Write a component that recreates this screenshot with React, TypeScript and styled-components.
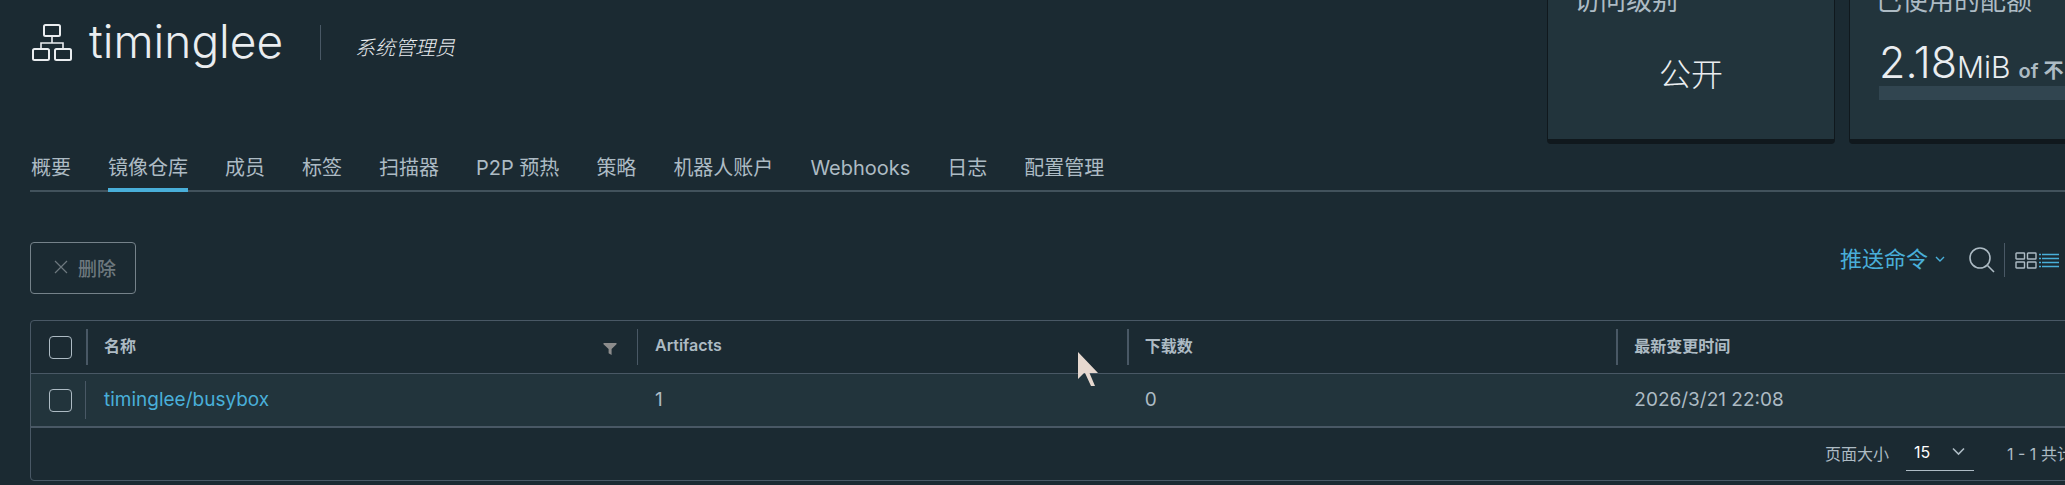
import React from "react";
import styled, { createGlobalStyle } from "styled-components";

const c = {
  bg: "#1b2a32",
  panel: "#22343c",
  line: "#495865",
  text: "#adbbc4",
  bright: "#eaedf0",
  link: "#49afd9",
  disabled: "#6d787e",
};

const GlobalStyle = createGlobalStyle`
  *, *::before, *::after { box-sizing: border-box; }
  html { background: ${c.bg}; }
  body {
    margin: 0;
    background: ${c.bg};
    color: ${c.text};
    font-family: Inter, "Noto Sans CJK SC", sans-serif;
    font-size: 19px;
    font-weight: 400;
    overflow: hidden;
  }
  button, select, input { font: inherit; margin: 0; }
  h1, h2, p { margin: 0; font-weight: 300; }
`;

const Page = styled.main`
  padding-left: 30px;
  margin-right: -42px;
`;

const Header = styled.header`
  display: flex;
  justify-content: space-between;
  height: 144px;
  overflow: hidden;
`;

const TitleRow = styled.div`
  display: flex;
  align-items: flex-start;
  padding-top: 24px;
`;

const ProjectIcon = styled.svg`
  width: 40px;
  height: 38px;
  margin-left: 2px;
`;

const Title = styled.h1`
  min-width: 196px;
  margin: -8px 35px 0 17px;
  color: ${c.bright};
  font-size: 46px;
  line-height: 50px;
`;

const Role = styled.em`
  margin-top: 1px;
  height: 35px;
  padding-left: 34px;
  border-left: 1px solid ${c.line};
  color: ${c.bright};
  font-size: 20px;
  font-weight: 300;
  line-height: 46px;
`;

const Cards = styled.div`
  display: flex;
  align-items: flex-end;
  gap: 14px;
  margin-right: -30px;
`;

const Card = styled.section`
  flex: none;
  width: 288px;
  height: 176px;
  padding: 12px 28px 0;
  border: 1px solid #10181d;
  border-bottom-width: 5px;
  border-radius: 4px;
  background: ${c.panel};
`;

const CardTitle = styled.h2`
  margin-left: -2px;
  font-size: 26px;
  font-weight: 400;
  line-height: 40px;
  white-space: nowrap;
`;

const Access = styled.p`
  margin-top: 34px;
  color: ${c.bright};
  font-size: 32px;
  line-height: 40px;
  text-align: center;
`;

const Quota = styled.p`
  display: flex;
  align-items: baseline;
  margin-top: 21px;
  padding-left: 1px;
  color: ${c.bright};
  font-size: 43px;
  line-height: 40px;
  white-space: nowrap;
`;

const Unit = styled.span`
  font-size: 30px;
`;

const Limit = styled.span`
  margin-left: 8px;
  color: ${c.text};
  font-size: 20px;
  font-weight: 600;
`;

const Meter = styled.div`
  height: 14px;
  margin: -5px 0 0 1px;
  background: #314550;
`;

const Tabs = styled.nav`
  display: flex;
  gap: 37px;
  height: 48px;
  padding-left: 1px;
  box-shadow: inset 0 -2px 0 #42525c;
`;

const Tab = styled.a<{ $active?: boolean }>`
  height: 48px;
  border-bottom: 4px solid ${(p) => (p.$active ? c.link : "transparent")};
  color: ${c.text};
  font-size: 20px;
  line-height: 48px;
  text-decoration: none;
  white-space: nowrap;
`;

const Toolbar = styled.div`
  display: flex;
  justify-content: space-between;
  align-items: flex-start;
  margin: 50px 48px 26px 0;
`;

const DeleteButton = styled.button`
  display: flex;
  align-items: center;
  gap: 10px;
  height: 52px;
  padding: 0 19px 2px 23px;
  border: 1px solid #75828a;
  border-radius: 4px;
  background: transparent;
  color: ${c.disabled};
  font-size: 19px;
  font-weight: 500;
`;

const Tools = styled.div`
  display: flex;
  align-items: center;
  height: 36px;
`;

const PlainButton = styled.button<{ $color?: string }>`
  display: flex;
  align-items: center;
  gap: 7px;
  padding: 0;
  border: 0;
  background: transparent;
  color: ${(p) => p.$color || c.text};
  font-size: 22px;
  line-height: 32px;
`;

const CommandButton = styled(PlainButton)`
  padding-bottom: 3px;
`;

const SearchButton = styled(PlainButton)`
  margin: 0 9px 0 24px;
`;

const ViewSwitch = styled.div`
  display: flex;
  align-items: center;
  gap: 2px;
  height: 34px;
  padding-left: 10px;
  border-left: 1px solid ${c.line};
`;

const Grid = styled.div`
  border: 1px solid ${c.line};
  border-radius: 4px;
`;

const Table = styled.table`
  width: 100%;
  table-layout: fixed;
  border-spacing: 0;
  text-align: left;
`;

const HeadCell = styled.th<{ $width?: number }>`
  width: ${(p) => (p.$width ? `${p.$width}px` : "auto")};
  height: 53px;
  padding: 0;
  border-bottom: 1px solid ${c.line};
  font-size: 16px;
  font-weight: 600;
`;

const HeadContent = styled.div<{ $thin?: boolean }>`
  display: flex;
  justify-content: space-between;
  align-items: center;
  height: 36px;
  padding: 0 20px 4px ${(p) => (p.$thin ? 17 : 16)}px;
  border-left: ${(p) => (p.$thin ? 1 : 2)}px solid ${c.line};
`;

const FilterIcon = styled.svg`
  margin-top: 7px;
`;

const Cell = styled.td`
  height: 54px;
  padding: 0 0 1px 18px;
  border-bottom: 2px solid ${c.line};
  background: ${c.panel};
`;

const SelectCell = styled(Cell)`
  padding: 0;
`;

const CheckSlot = styled.label<{ $divided?: boolean }>`
  display: flex;
  align-items: center;
  height: 38px;
  padding-left: 18px;
  border-right: ${(p) => (p.$divided ? `1px solid ${c.line}` : "0")};
`;

const Checkbox = styled.input`
  appearance: none;
  width: 23px;
  height: 23px;
  border: 1px solid ${c.text};
  border-radius: 4px;
`;

const RepoLink = styled.a`
  color: ${c.link};
  text-decoration: none;
`;

const Footer = styled.footer`
  display: flex;
  align-items: center;
  justify-content: flex-end;
  height: 52px;
  padding: 0 18px 2px 0;
  font-size: 16px;
`;

const PageSize = styled.label`
  display: flex;
  align-items: center;
  gap: 17px;
`;

const SelectBox = styled.span`
  position: relative;
  display: block;
`;

const Select = styled.select`
  display: block;
  appearance: none;
  width: 68px;
  height: 36px;
  padding: 0 8px 2px;
  border: 0;
  border-bottom: 1px solid ${c.text};
  border-radius: 0;
  background: transparent;
  color: #fff;
`;

const SelectArrow = styled.svg`
  position: absolute;
  right: 9px;
  top: 12px;
  pointer-events: none;
`;

const Range = styled.span`
  min-width: 81px;
  margin-left: 33px;
  white-space: nowrap;
`;

const Pointer = styled.svg`
  position: absolute;
  left: 1078px;
  top: 351px;
  pointer-events: none;
`;

const tabs = ["概要", "镜像仓库", "成员", "标签", "扫描器", "P2P 预热", "策略", "机器人账户", "Webhooks", "日志", "配置管理"];

export default function App() {
  return (
    <>
      <GlobalStyle />
      <Page>
        <Header>
          <TitleRow>
            <ProjectIcon viewBox="0 0 40 38" fill="none" stroke={c.bright} strokeWidth="2" aria-hidden="true">
              <rect x="12" y="1" width="16" height="11" rx="1.500" />
              <rect x="1" y="25" width="16" height="11" rx="1.500" />
              <rect x="23" y="25" width="16" height="11" rx="1.500" />
              <path d="M20 13v6M9 24v-5h22v5" strokeWidth="1.6" />
            </ProjectIcon>
            <Title>timinglee</Title>
            <Role>系统管理员</Role>
          </TitleRow>
          <Cards>
            <Card>
              <CardTitle>访问级别</CardTitle>
              <Access>公开</Access>
            </Card>
            <Card>
              <CardTitle>已使用的配额</CardTitle>
              <Quota>
                2.18<Unit>MiB</Unit>
                <Limit>of 不</Limit>
              </Quota>
              <Meter />
            </Card>
          </Cards>
        </Header>

        <Tabs>
          {tabs.map((name) => (
            <Tab key={name} href="#" $active={name === "镜像仓库"}>
              {name}
            </Tab>
          ))}
        </Tabs>

        <Toolbar>
          <DeleteButton disabled>
            <svg width="14" height="14" viewBox="0 0 14 14" fill="none" stroke="currentColor" strokeWidth="1.2" aria-hidden="true">
              <path d="M1 1l12 12M13 1L1 13" />
            </svg>
            删除
          </DeleteButton>
          <Tools>
            <CommandButton $color={c.link}>
              推送命令
              <svg width="10" height="8" viewBox="0 0 10 8" fill="none" stroke="currentColor" strokeWidth="1.4" aria-hidden="true">
                <path d="M1 2l4 4 4-4" />
              </svg>
            </CommandButton>
            <SearchButton aria-label="搜索">
              <svg width="26" height="26" viewBox="0 0 26 26" fill="none" stroke="currentColor" strokeWidth="1.6" aria-hidden="true">
                <circle cx="11" cy="11" r="10" />
                <path d="M18.5 18.5l6.5 6.5" />
              </svg>
            </SearchButton>
            <ViewSwitch>
              <PlainButton aria-label="卡片视图">
                <svg width="22" height="17" viewBox="0 0 22 17" fill="none" stroke="currentColor" strokeWidth="1.4" aria-hidden="true">
                  <rect x="1" y="1" width="8.5" height="6" rx="0.6" />
                  <rect x="12.5" y="1" width="8.5" height="6" rx="0.6" />
                  <rect x="1" y="10" width="8.5" height="6" rx="0.6" />
                  <rect x="12.5" y="10" width="8.5" height="6" rx="0.6" />
                </svg>
              </PlainButton>
              <PlainButton $color={c.link} aria-label="列表视图">
                <svg width="20" height="15" viewBox="0 0 20 15" stroke="currentColor" strokeWidth="1.4" aria-hidden="true">
                  <path d="M0 1.5h2M3 1.5h17M0 5.5h2M3 5.5h17M0 9.5h2M3 9.5h17M0 13.5h2M3 13.5h17" />
                </svg>
              </PlainButton>
            </ViewSwitch>
          </Tools>
        </Toolbar>

        <Grid>
          <Table>
            <thead>
              <tr>
                <HeadCell $width={55}>
                  <CheckSlot>
                    <Checkbox type="checkbox" aria-label="全选" />
                  </CheckSlot>
                </HeadCell>
                <HeadCell $width={551}>
                  <HeadContent>
                    名称
                    <FilterIcon width="14" height="12" viewBox="0 0 14 12" fill="#8c8c8c" aria-hidden="true">
                      <path d="M0.5 0h13v1.2L8.6 6v6l-3-1.8V6L0.5 1.2z" />
                    </FilterIcon>
                  </HeadContent>
                </HeadCell>
                <HeadCell>
                  <HeadContent $thin>Artifacts</HeadContent>
                </HeadCell>
                <HeadCell>
                  <HeadContent>下载数</HeadContent>
                </HeadCell>
                <HeadCell>
                  <HeadContent>最新变更时间</HeadContent>
                </HeadCell>
              </tr>
            </thead>
            <tbody>
              <tr>
                <SelectCell>
                  <CheckSlot $divided>
                    <Checkbox type="checkbox" aria-label="timinglee/busybox" />
                  </CheckSlot>
                </SelectCell>
                <Cell>
                  <RepoLink href="#">timinglee/busybox</RepoLink>
                </Cell>
                <Cell>1</Cell>
                <Cell>0</Cell>
                <Cell>2026/3/21 22:08</Cell>
              </tr>
            </tbody>
          </Table>
          <Footer>
            <PageSize>
              页面大小
              <SelectBox>
                <Select defaultValue="15">
                  <option>15</option>
                  <option>25</option>
                  <option>50</option>
                </Select>
                <SelectArrow width="13" height="9" viewBox="0 0 13 9" fill="none" stroke={c.text} strokeWidth="1.6" aria-hidden="true">
                  <path d="M1 1.5l5.5 5.5L12 1.5" />
                </SelectArrow>
              </SelectBox>
            </PageSize>
            <Range>1 - 1 共计</Range>
          </Footer>
        </Grid>
      </Page>
      <Pointer width="21" height="36" viewBox="0 0 21 36" fill="#e6d8cf" aria-hidden="true">
        <path d="M0 1v27l6-6h1l6 13h4l-5.500-13H20z" />
      </Pointer>
    </>
  );
}
